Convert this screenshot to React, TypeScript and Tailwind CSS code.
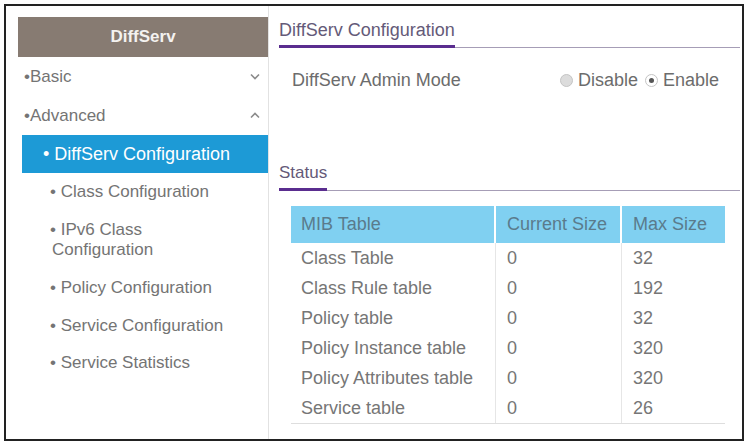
import React from "react";

const font = { fontFamily: '"Liberation Sans", Arial, sans-serif' };

function ChevronDown() {
  return (
    <svg width="10" height="7" viewBox="0 0 10 7" className="block">
      <path d="M1 1.5 L5 5.5 L9 1.5" fill="none" stroke="#8a8a8a" strokeWidth="1.6" />
    </svg>
  );
}
function ChevronUp() {
  return (
    <svg width="10" height="7" viewBox="0 0 10 7" className="block">
      <path d="M1 5.5 L5 1.5 L9 5.5" fill="none" stroke="#8a8a8a" strokeWidth="1.6" />
    </svg>
  );
}

const rows: [string, string, string][] = [
  ["Class Table", "0", "32"],
  ["Class Rule table", "0", "192"],
  ["Policy table", "0", "32"],
  ["Policy Instance table", "0", "320"],
  ["Policy Attributes table", "0", "320"],
  ["Service table", "0", "26"],
];

export default function App() {
  return (
    <div className="w-[745px] h-[442px] bg-white overflow-hidden" style={font}>
      <div className="ml-[4px] mt-[4px] w-[740px] h-[437px] border-2 border-[#222] flex bg-white">
        {/* Sidebar */}
        <div className="w-[263px] h-full pl-[12px] pt-[11px] border-r border-[#e2e2e2] shrink-0">
          <div className="h-[40px] bg-[#877b72] flex items-center justify-center text-[#f4f2f0] text-[17px] font-bold">
            DiffServ
          </div>
          <div className="h-[39px] flex items-center justify-between pl-[6px] pr-[8px] text-[17px] text-[#747474]">
            <span>•Basic</span>
            <ChevronDown />
          </div>
          <div className="h-[39px] flex items-center justify-between pl-[6px] pr-[8px] text-[17px] text-[#747474]">
            <span>•Advanced</span>
            <ChevronUp />
          </div>
          <div className="ml-[4px] h-[38px] bg-[#1d9ad6] flex items-center pl-[21px] text-[18px] text-white">
            • DiffServ Configuration
          </div>
          <div className="h-[38px] flex items-center pl-[32px] text-[17px] text-[#747474]">
            • Class Configuration
          </div>
          <div className="h-[58px] flex flex-col justify-center pl-[32px] text-[17px] leading-[20px] text-[#747474]">
            <span>• IPv6 Class</span>
            <span className="pl-[2px]">Configuration</span>
          </div>
          <div className="h-[38px] flex items-center pl-[32px] text-[17px] text-[#747474]">
            • Policy Configuration
          </div>
          <div className="h-[37px] flex items-center pl-[32px] text-[17px] text-[#747474]">
            • Service Configuration
          </div>
          <div className="h-[37px] flex items-center pl-[32px] text-[17px] text-[#747474]">
            • Service Statistics
          </div>
        </div>

        {/* Content */}
        <div className="flex-1 h-full pl-[10px] pr-[2px] pt-[14px]">
          <div className="flex items-end">
            <div className="text-[18px] leading-[20px] text-[#645a78] pb-[5px] border-b-[3px] border-[#5a2d8f]">
              DiffServ Configuration
            </div>
            <div className="flex-1 border-b border-[#a69db6]" />
          </div>

          <div className="mt-[21px] pl-[13px] pr-[21px] flex items-center justify-between text-[18px] leading-[22px] text-[#6c6c6c]">
            <span>DiffServ Admin Mode</span>
            <div className="flex items-center">
              <span className="w-[13px] h-[13px] rounded-full bg-[#dcdcdc] border border-[#c4c4c4] mr-[5px]" />
              <span>Disable</span>
              <span className="w-[13px] h-[13px] rounded-full bg-white border border-[#c4c4c4] flex items-center justify-center ml-[7px] mr-[5px]">
                <span className="w-[5px] h-[5px] rounded-full bg-[#555]" />
              </span>
              <span>Enable</span>
            </div>
          </div>

          <div className="mt-[72px] flex items-end">
            <div className="text-[17px] leading-[20px] text-[#645a78] pb-[5px] border-b-[3px] border-[#5a2d8f]">
              Status
            </div>
            <div className="flex-1 border-b border-[#a69db6]" />
          </div>

          <div className="mt-[15px] ml-[12px] w-[434px] text-[18px]">
            <div className="flex h-[37px] bg-[#80d0f1] text-[#5a7b8c]">
              <div className="w-[205px] pl-[10px] flex items-center border-r-2 border-white">MIB Table</div>
              <div className="w-[126px] pl-[11px] flex items-center border-r-2 border-white">Current Size</div>
              <div className="flex-1 pl-[11px] flex items-center">Max Size</div>
            </div>
            <div className="border-b border-[#dedede] text-[#767676]">
              {rows.map((r) => (
                <div key={r[0]} className="flex h-[30px]">
                  <div className="w-[205px] pl-[10px] flex items-center border-r border-[#e6e6e6]">{r[0]}</div>
                  <div className="w-[126px] pl-[11px] flex items-center border-r border-[#e6e6e6]">{r[1]}</div>
                  <div className="flex-1 pl-[11px] flex items-center">{r[2]}</div>
                </div>
              ))}
            </div>
          </div>
        </div>
      </div>
    </div>
  );
}
